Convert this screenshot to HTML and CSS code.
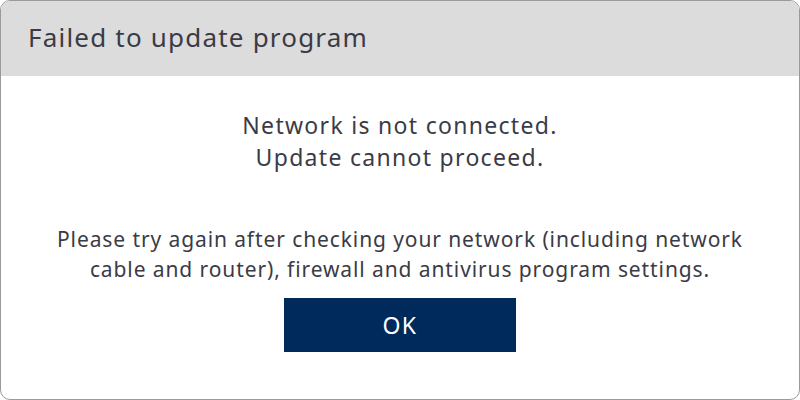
FILE: index.html
```html
<!DOCTYPE html>
<html>
<head>
<meta charset="utf-8">
<link rel="stylesheet" href="styles.css">
</head>
<body>
<div class="dialog">
  <div class="header">Failed to update program</div>
  <div class="content">
    <p class="main">Network is not connected.<br>Update cannot proceed.</p>
    <p class="detail">Please try again after checking your network (including network<br>cable and router), firewall and antivirus program settings.</p>
    <button class="ok">OK</button>
  </div>
</div>
</body>
</html>
```
FILE: styles.css
```css
html, body {
  margin: 0;
  padding: 0;
  background: #ffffff;
}
body {
  font-family: "Noto Sans", "DejaVu Sans", sans-serif;
  color: #3b3b46;
}
.dialog {
  width: 800px;
  height: 400px;
  box-sizing: border-box;
  border: 1px solid #9a9a9a;
  border-radius: 10px;
  overflow: hidden;
  display: flex;
  flex-direction: column;
}
.header {
  height: 75px;
  flex: none;
  box-sizing: border-box;
  background: #dcdcdc;
  display: flex;
  align-items: center;
  padding: 0 0 4px 27px;
  font-size: 26px;
  letter-spacing: 1.2px;
}
.content {
  flex: 1;
  display: flex;
  flex-direction: column;
  align-items: center;
  text-align: center;
}
.main {
  margin: 33px 0 0;
  font-size: 23px;
  line-height: 32px;
  letter-spacing: 1.3px;
}
.detail {
  margin: 51px 0 0;
  font-size: 21px;
  line-height: 30px;
  letter-spacing: 0.9px;
}
.ok {
  margin-top: 14px;
  width: 232px;
  height: 54px;
  border: none;
  background: #002a5c;
  color: #ffffff;
  font-family: "Noto Sans", "DejaVu Sans", sans-serif;
  font-size: 23px;
  letter-spacing: 1.5px;
  padding: 0;
}
```
